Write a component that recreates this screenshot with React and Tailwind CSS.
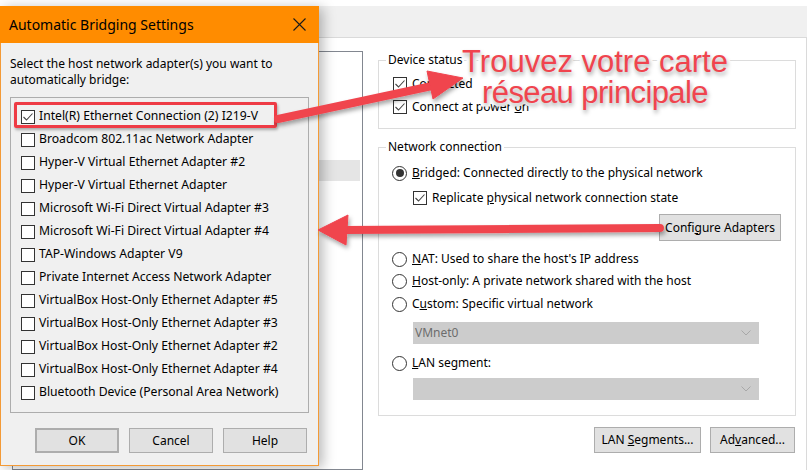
const ADAPTERS = [
  'Intel(R) Ethernet Connection (2) I219-V',
  'Broadcom 802.11ac Network Adapter',
  'Hyper-V Virtual Ethernet Adapter #2',
  'Hyper-V Virtual Ethernet Adapter',
  'Microsoft Wi-Fi Direct Virtual Adapter #3',
  'Microsoft Wi-Fi Direct Virtual Adapter #4',
  'TAP-Windows Adapter V9',
  'Private Internet Access Network Adapter',
  'VirtualBox Host-Only Ethernet Adapter #5',
  'VirtualBox Host-Only Ethernet Adapter #3',
  'VirtualBox Host-Only Ethernet Adapter #2',
  'VirtualBox Host-Only Ethernet Adapter #4',
  'Bluetooth Device (Personal Area Network)',
]

function Check({ checked }) {
  return (
    <span className="inline-flex w-[14px] h-[14px] shrink-0 border border-[#333] bg-white items-center justify-center">
      {checked && (
        <svg width="12" height="12" viewBox="0 0 12 12">
          <polyline points="1.5,6 4.5,9 10.5,2.5" fill="none" stroke="#444" strokeWidth="1.1" />
        </svg>
      )}
    </span>
  )
}

function Radio({ on }) {
  return (
    <span className="inline-flex w-[15px] h-[15px] shrink-0 rounded-full border border-[#333] bg-white items-center justify-center">
      {on && <span className="w-[8px] h-[8px] rounded-full bg-[#333]" />}
    </span>
  )
}

function WinButton({ children, className = '' }) {
  return (
    <div className={`flex items-center justify-center bg-[#e1e1e1] border border-[#adadad] text-[12px] text-black ${className}`}>
      <span>{children}</span>
    </div>
  )
}

function Dropdown({ value }) {
  return (
    <div className="ml-[21px] mr-[36px] h-[22px] bg-[#cccccc] flex items-center justify-between pl-[2px] pr-[8px] text-[12px] text-[#6d6d6d]">
      <span>{value}</span>
      <svg width="10" height="6" viewBox="0 0 10 6">
        <polyline points="0.5,0.5 5,5 9.5,0.5" fill="none" stroke="#a8a8a8" strokeWidth="1" />
      </svg>
    </div>
  )
}

export default function App() {
  return (
    <div className="relative w-[808px] h-[470px] overflow-hidden bg-white text-black font-['Noto_Sans',sans-serif]">
      {/* background VM settings window */}
      <div className="h-[6px] bg-white" />
      <div className="h-[32px] bg-[#f0f0f0] border-b border-[#dadada] mr-[1px]" />
      <div className="flex border-r border-[#dadada] h-[432px] mr-[1px]">
        <div className="pl-[12px] pt-[13px] w-[363px]">
          <div className="h-full border border-[#828790] pr-[2px]">
            <div className="h-[108px]" />
            <div className="h-[21px] bg-[#e5e5e5]" />
          </div>
        </div>
        <div className="ml-[15px] w-[418px] pt-[14px] text-[12px]">
          <fieldset className="border border-[#dcdcdc]">
            <legend className="ml-[7px] px-[2px] leading-[16px]">Device status</legend>
            <div className="pl-[14px] pt-[6px] pb-[11px]">
              <div className="flex items-center gap-[5px] h-[20px]">
                <Check checked />
                <span>Connected</span>
              </div>
              <div className="flex items-center gap-[5px] h-[20px] mt-[3px]">
                <Check checked />
                <span>Connect at power <u>o</u>n</span>
              </div>
            </div>
          </fieldset>
          <fieldset className="border border-[#dcdcdc] mt-[10px]">
            <legend className="ml-[7px] px-[2px] leading-[16px]">Network connection</legend>
            <div className="pl-[13px] pt-[8px] pb-[15px]">
              <div className="flex items-center gap-[5px] h-[20px]">
                <Radio on />
                <span><u>B</u>ridged: Connected directly to the physical network</span>
              </div>
              <div className="flex items-center gap-[5px] h-[20px] mt-[5px] ml-[21px]">
                <Check checked />
                <span>Replicate <u>p</u>hysical network connection state</span>
              </div>
              <div className="flex justify-end mt-[6px] mr-[14px]">
                <WinButton className="w-[122px] h-[27px]">Confi<u>g</u>ure Adapters</WinButton>
              </div>
              <div className="flex items-center gap-[5px] h-[20px] mt-[8px]">
                <Radio />
                <span><u>N</u>AT: Used to share the host's IP address</span>
              </div>
              <div className="flex items-center gap-[5px] h-[20px] mt-[2px]">
                <Radio />
                <span><u>H</u>ost-only: A private network shared with the host</span>
              </div>
              <div className="flex items-center gap-[5px] h-[20px] mt-[3px]">
                <Radio />
                <span>C<u>u</u>stom: Specific virtual network</span>
              </div>
              <div className="mt-[8px]">
                <Dropdown value="VMnet0" />
              </div>
              <div className="flex items-center gap-[5px] h-[20px] mt-[9px]">
                <Radio />
                <span><u>L</u>AN segment:</span>
              </div>
              <div className="mt-[5px]">
                <Dropdown value="" />
              </div>
            </div>
          </fieldset>
          <div className="flex justify-end gap-[9px] mt-[11px] mr-[1px]">
            <WinButton className="w-[107px] h-[26px]">LAN <u>S</u>egments...</WinButton>
            <WinButton className="w-[85px] h-[26px]">Ad<u>v</u>anced...</WinButton>
          </div>
        </div>
      </div>

      {/* Automatic Bridging Settings dialog */}
      <div className="absolute left-0 top-[6px] w-[319px] h-[460px] bg-[#f0f0f0] border border-[#f39a36] border-t-0 shadow-[4px_2px_12px_rgba(0,0,0,0.28)] flex flex-col">
        <div className="h-[37px] bg-[#ff8c00] flex items-center justify-between pl-[9px] pr-[13px] -mx-[1px]">
          <span className="text-[14px] text-black">Automatic Bridging Settings</span>
          <svg width="13" height="13" viewBox="0 0 13 13">
            <path d="M0.5 0.5 L12.5 12.5 M12.5 0.5 L0.5 12.5" stroke="#1a1a1a" strokeWidth="1.1" />
          </svg>
        </div>
        <div className="px-[9px] pt-[13px] text-[12px] leading-[16px]">
          Select the host network adapter(s) you want to
          <br />
          automatically bridge:
        </div>
        <div className="relative mx-[9px] mt-[9px] h-[316px] border border-[#adadad] bg-[#f0f0f0] pt-[7px]">
          {ADAPTERS.map((a, i) => (
            <div key={a} className="flex items-center gap-[4px] h-[23px] pl-[10px] text-[12.2px]">
              <Check checked={i === 0} />
              <span>{a}</span>
            </div>
          ))}
          <div className="absolute left-[3px] top-[4px] w-[263px] h-[26px] border-[3px] border-[#ee3b45] rounded-[2px] shadow-[1px_2px_3px_rgba(0,0,0,0.3)]" />
        </div>
        <div className="flex gap-[10px] pl-[34px] mt-[15px]">
          <WinButton className="w-[84px] h-[25px] border-2 border-[#0078d7]">OK</WinButton>
          <WinButton className="w-[84px] h-[25px]">Cancel</WinButton>
          <WinButton className="w-[84px] h-[25px]">Help</WinButton>
        </div>
      </div>

      {/* annotation arrows */}
      <svg className="absolute left-0 top-0 pointer-events-none" width="808" height="470" viewBox="0 0 808 470">
        <defs>
          <filter id="sh" x="-10%" y="-30%" width="120%" height="160%">
            <feDropShadow dx="1.5" dy="3" stdDeviation="2" floodColor="#000" floodOpacity="0.35" />
          </filter>
        </defs>
        <g fill="#f0444e" stroke="#f0444e" filter="url(#sh)">
          <line x1="278" y1="119" x2="432" y2="86" strokeWidth="8" strokeLinecap="round" />
          <polygon points="427,71 433,99 463,78" strokeWidth="1" strokeLinejoin="round" />
          <line x1="660" y1="228" x2="344" y2="230" strokeWidth="8" strokeLinecap="round" />
          <polygon points="348,215 346,245 318,230" strokeWidth="1" strokeLinejoin="round" />
        </g>
      </svg>

      {/* annotation text */}
      <div className="absolute left-[445px] top-[46px] w-[300px] text-center text-[31px] leading-[31px] text-[#f0444e] font-['Liberation_Sans',Arial,sans-serif] [-webkit-text-stroke:7px_white] [paint-order:stroke_fill] [text-shadow:1px_3px_4px_rgba(0,0,0,0.35)]">
        Trouvez votre carte
        <br />
        <span className="tracking-[-0.6px]">réseau principale</span>
      </div>
    </div>
  )
}
